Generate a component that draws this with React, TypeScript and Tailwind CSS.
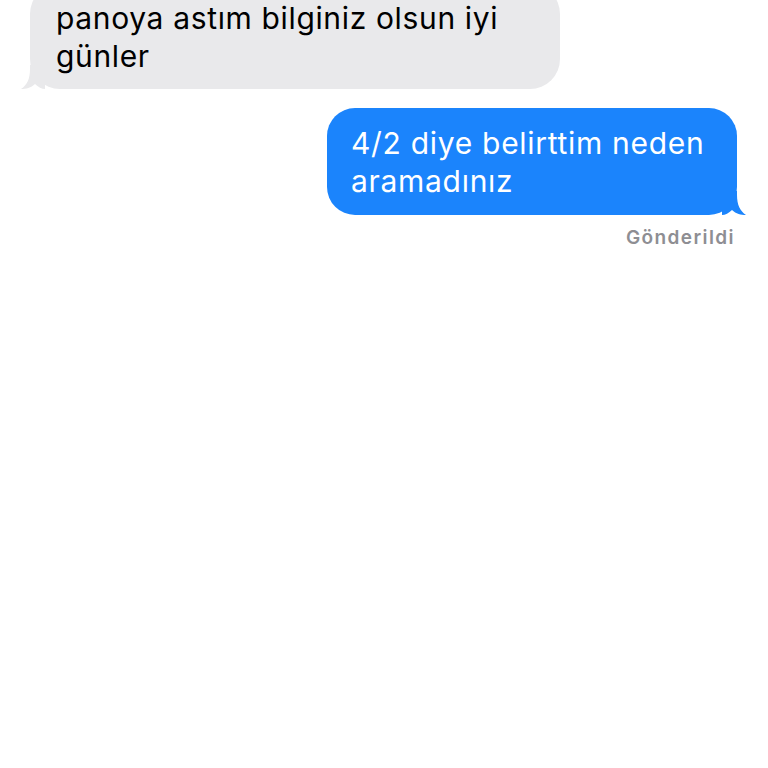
import React from "react";

export default function App() {
  return (
    <div className="w-[768px] h-[768px] bg-white overflow-hidden" style={{ fontFamily: "Inter, 'Noto Sans', sans-serif" }}>
      <div className="flex flex-col">
        <div className="relative ml-[30px] mt-[-16px] w-[530px] rounded-[30px] bg-[#e9e9eb] pl-[26px] pr-4 pt-[15px] pb-[14px] text-[30px] leading-[38px] text-black tracking-[0.65px]">
          <div>panoya astım bilginiz olsun iyi</div>
          <div>günler</div>
          <svg className="absolute left-[-9px] bottom-0" width="24" height="24" viewBox="0 0 24 24">
            <path d="M24 0 L9 0 L9 4 C9 14 6 20 0 24 C5 24 10 23 14 19 C17 22 21 24 24 24 Z" fill="#e9e9eb" />
          </svg>
        </div>
        <div className="relative self-end mr-[31px] mt-[19px] w-[410px] rounded-[28px] bg-[#1b84fc] pl-[24px] pr-4 pt-[16px] pb-[15px] text-[30px] leading-[38px] text-white tracking-[0.7px]">
          <div>4/2 diye belirttim neden</div>
          <div>aramadınız</div>
          <svg className="absolute right-[-9px] bottom-0" width="24" height="24" viewBox="0 0 24 24">
            <path d="M0 0 L15 0 L15 4 C15 14 18 20 24 24 C19 24 14 23 10 19 C7 22 3 24 0 24 Z" fill="#1b84fc" />
          </svg>
        </div>
        <div className="self-end mr-[33px] mt-[12px] text-[19px] leading-[22px] font-semibold text-[#8e8e93] tracking-[1.4px]">Gönderildi</div>
      </div>
    </div>
  );
}
